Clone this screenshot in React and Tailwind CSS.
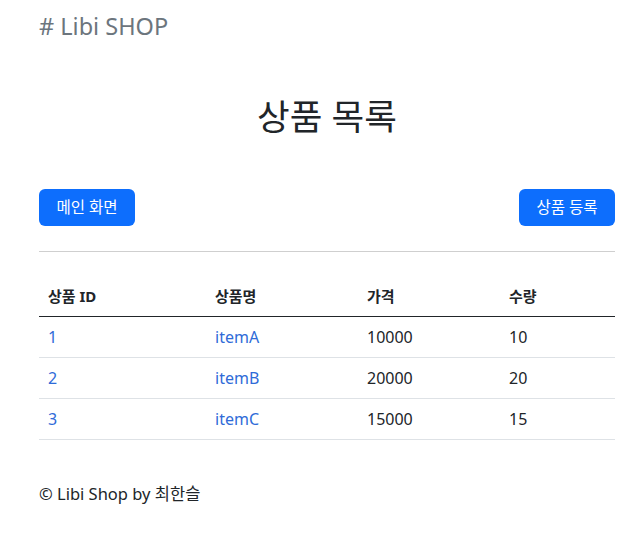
const ITEMS = [
  { id: 1, name: "itemA", price: 10000, quantity: 10 },
  { id: 2, name: "itemB", price: 20000, quantity: 20 },
  { id: 3, name: "itemC", price: 15000, quantity: 15 },
];

const FONT = "font-['Noto_Sans','Noto_Sans_CJK_KR',sans-serif]";

export default function App() {
  return (
    <div className={`min-h-screen bg-white text-[#212529] text-[16px] ${FONT}`}>
      <div className="w-[576px] ml-[39px]">
        {/* ── HEADER ── */}
        <div className="pt-[10px] h-[44px] text-[23.5px] leading-[32px] text-[#6c757d]">
          # Libi SHOP
        </div>

        <h2 className="mt-[50px] text-center text-[35.5px] leading-[44px] font-normal">
          상품 목록
        </h2>

        {/* ── BUTTONS ── */}
        <div className="mt-[51px] flex justify-between">
          <button className="h-[37px] w-[96px] rounded-[6px] bg-[#0d6efd] text-white text-[15.5px]">
            메인 화면
          </button>
          <button className="h-[37px] w-[96px] rounded-[6px] bg-[#0d6efd] text-white text-[15.5px]">
            상품 등록
          </button>
        </div>

        <hr className="mt-[25px] border-t border-[#cfcfcf]" />

        {/* ── TABLE ── */}
        <table className="mt-[24px] w-full border-collapse table-fixed">
          <thead>
            <tr className="border-b border-[#212529]">
              <th className="w-[168px] px-[9px] h-[40px] text-left font-bold text-[15px]">상품 ID</th>
              <th className="w-[152px] px-[8px] text-left font-bold text-[15px]">상품명</th>
              <th className="w-[142px] px-[8px] text-left font-bold text-[15px]">가격</th>
              <th className="px-[8px] text-left font-bold text-[15px]">수량</th>
            </tr>
          </thead>
          <tbody>
            {ITEMS.map((item) => (
              <tr key={item.id} className="border-b border-[#dee2e6] h-[41px]">
                <td className="px-[9px] text-[#2f6bd8]">{item.id}</td>
                <td className="px-[8px] text-[#2f6bd8]">{item.name}</td>
                <td className="px-[8px]">{item.price}</td>
                <td className="px-[8px]">{item.quantity}</td>
              </tr>
            ))}
          </tbody>
        </table>

        {/* ── FOOTER ── */}
        <footer className="mt-[42px] text-[16.5px]">© Libi Shop by 최한슬</footer>
      </div>
    </div>
  );
}
